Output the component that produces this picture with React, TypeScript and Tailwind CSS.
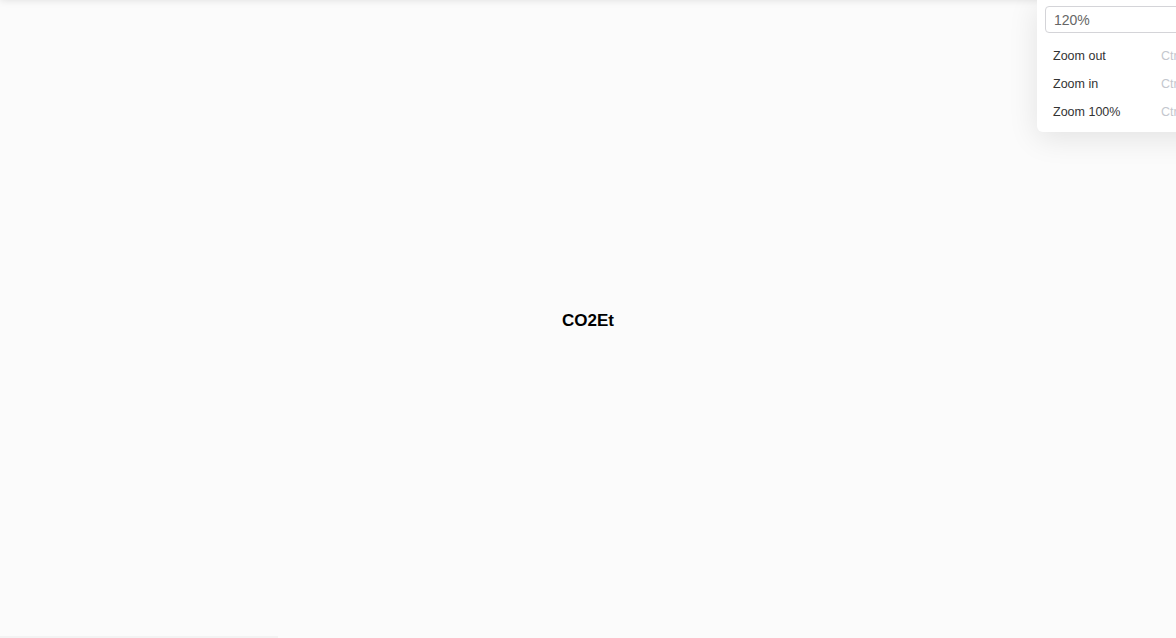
import React from 'react';

const items = [
  { label: 'Zoom out', keys: 'Ctrl+-' },
  { label: 'Zoom in', keys: 'Ctrl++' },
  { label: 'Zoom 100%', keys: 'Ctrl+0' },
];

const App: React.FC = () => {
  return (
    <div
      className="relative w-[1176px] h-[638px] overflow-hidden bg-[#fbfbfb]"
      style={{ fontFamily: '"Liberation Sans", Arial, sans-serif' }}
    >
      {/* toolbar sitting just above the viewport */}
      <div className="absolute left-0 right-0 -top-[40px] h-[40px] bg-white shadow-[0_0_8px_rgba(0,0,0,0.12)]" />

      {/* bottom strip edge */}
      <div className="absolute left-0 bottom-0 w-[278px] h-[2px] bg-[#f3f3f3]" />

      <div className="flex h-full items-center justify-center">
        <span className="mt-[4px] text-[17px] font-bold text-black">CO2Et</span>
      </div>

      {/* zoom dropdown */}
      <div className="absolute left-[1037px] top-0 w-[220px] rounded-b-[6px] bg-white px-[8px] pt-[6px] pb-[6px] shadow-[0_6px_30px_rgba(0,0,0,0.10)]">
        <div className="flex h-[27px] items-center rounded-[4px] border border-[#d4d4d8] pl-[8px] pt-[1px] text-[14px] text-[#666]">
          120%
        </div>
        <div className="mt-[9px] flex flex-col">
          {items.map((item) => (
            <div key={item.label} className="flex h-[28px] items-center px-[8px] text-[12.5px]">
              <span className="w-[108px] shrink-0 text-[#333]">{item.label}</span>
              <span className="text-[#c4c7ce]">{item.keys}</span>
            </div>
          ))}
        </div>
      </div>
    </div>
  );
};

export default App;
